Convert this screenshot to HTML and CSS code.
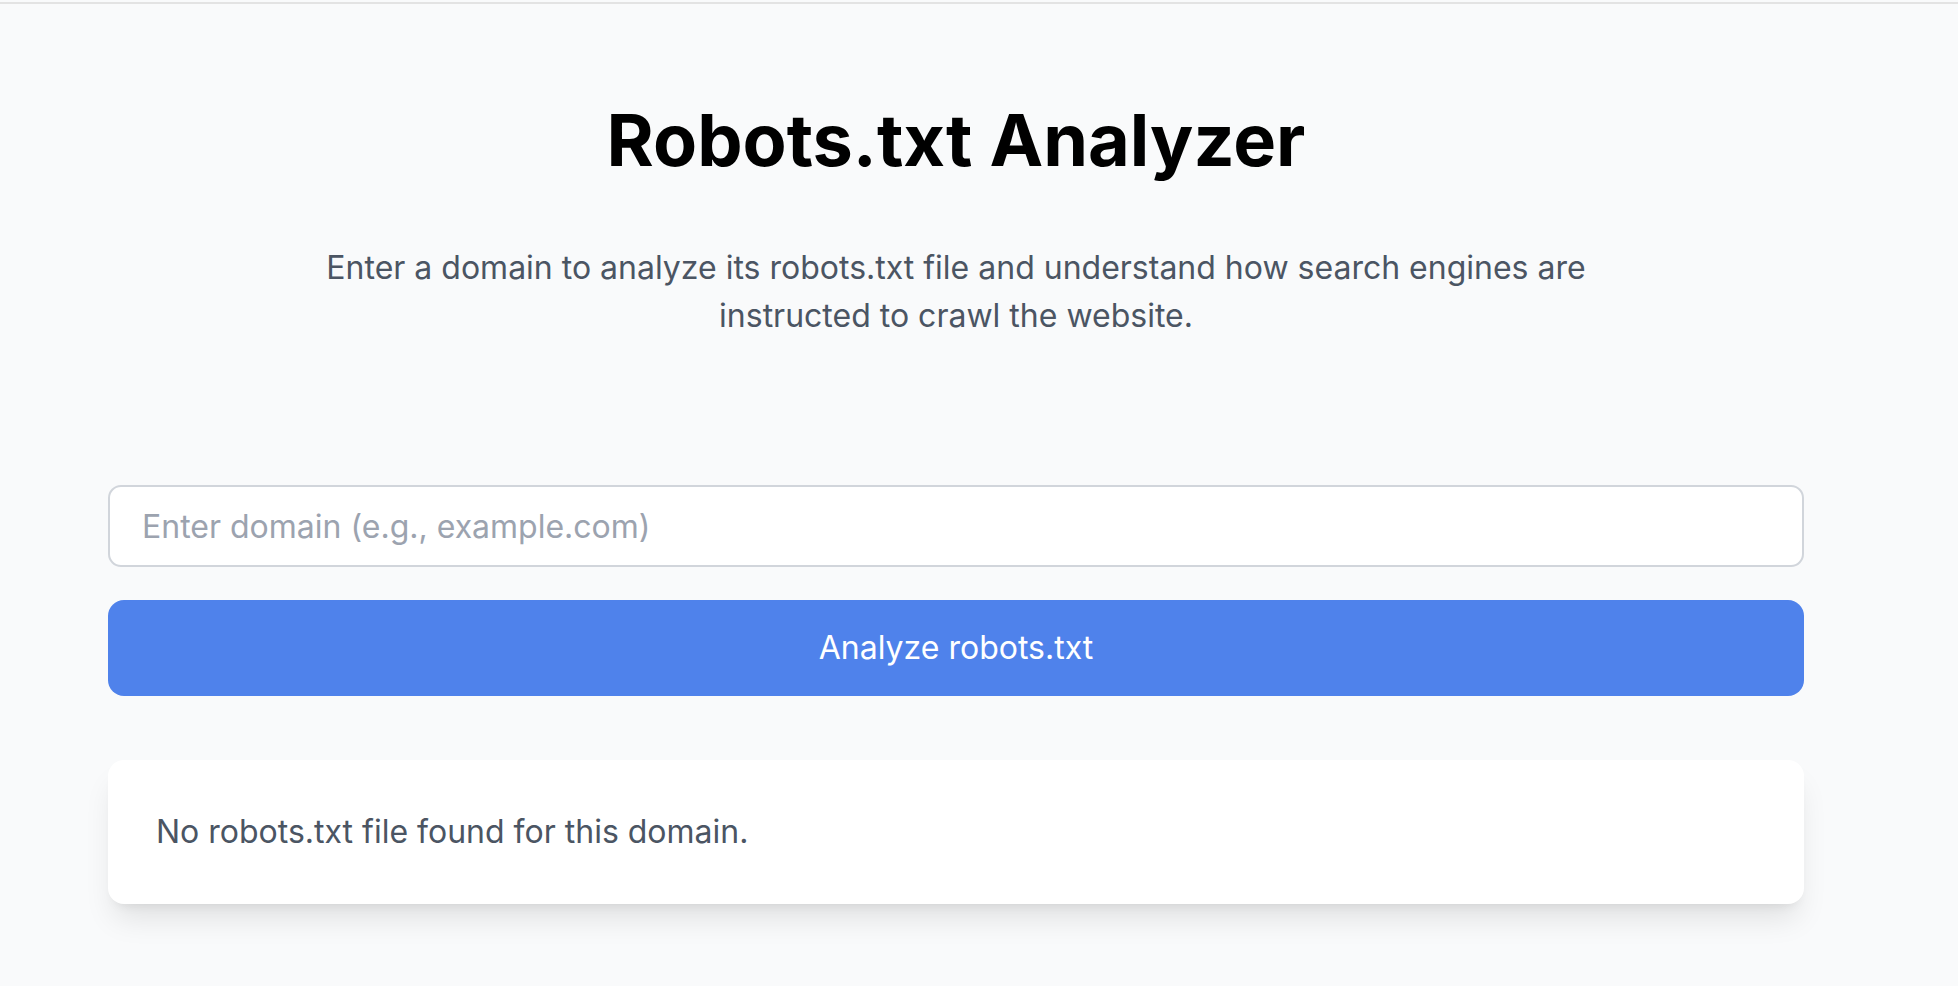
FILE: index.html
```html
<!DOCTYPE html>
<html lang="en">
<head>
<meta charset="utf-8">
<title>Robots.txt Analyzer</title>
<link rel="stylesheet" href="styles.css">
</head>
<body>
<div class="topline"></div>
<main class="page">
  <header class="hero">
    <h1 class="title">Robots.txt Analyzer</h1>
    <p class="subtitle">Enter a domain to analyze its robots.txt file and understand how search engines are instructed to crawl the website.</p>
  </header>
  <form class="form">
    <input class="domain-input" type="text" placeholder="Enter domain (e.g., example.com)">
    <button class="analyze-btn" type="button">Analyze robots.txt</button>
  </form>
  <section class="result-card">
    <p class="result-text">No robots.txt file found for this domain.</p>
  </section>
</main>
</body>
</html>
```

FILE: styles.css
```css
* { box-sizing: border-box; }
html, body {
  margin: 0;
  padding: 0;
  background: #f9fafb;
  font-family: Inter, "Noto Sans", sans-serif;
  height: 100%;
  overflow: hidden;
}
.topline {
  margin-top: 2px;
  height: 2px;
  background: #e3e3e3;
}
.page {
  padding: 96px 154px 0 108px;
}
.hero {
  display: flex;
  flex-direction: column;
  align-items: center;
  text-align: center;
}
.title {
  margin: 0;
  font-size: 72px;
  line-height: 80px;
  font-weight: 700;
  color: #000;
}
.subtitle {
  margin: 64px 0 0;
  max-width: 1344px;
  font-size: 32px;
  line-height: 48px;
  color: #4b5563;
}
.form {
  margin-top: 145px;
  display: flex;
  flex-direction: column;
  gap: 33px;
}
.domain-input {
  display: block;
  width: 100%;
  height: 82px;
  padding: 0 32px;
  border: 2px solid #d1d5db;
  border-radius: 13px;
  background: #fff;
  font-family: inherit;
  font-size: 32px;
  color: #111827;
  outline: none;
}
.domain-input::placeholder { color: #9ca3af; }
.analyze-btn {
  display: block;
  width: 100%;
  height: 96px;
  border: 0;
  border-radius: 16px;
  background: #4f82eb;
  color: #fff;
  font-family: inherit;
  font-size: 32px;
  line-height: 48px;
  cursor: pointer;
}
.result-card {
  margin-top: 64px;
  background: #fff;
  border-radius: 16px;
  padding: 48px;
  box-shadow: 0 20px 30px -6px rgba(0,0,0,0.10), 0 8px 12px -8px rgba(0,0,0,0.10);
}
.result-text {
  margin: 0;
  font-size: 32px;
  line-height: 48px;
  color: #4b5563;
}
```
